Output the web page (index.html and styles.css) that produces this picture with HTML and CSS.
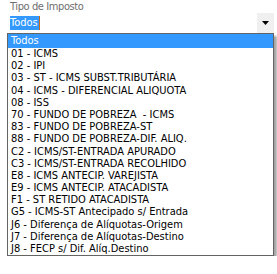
FILE: index.html
```html
<!DOCTYPE html>
<html>
<head>
  <meta charset="utf-8">
  <title>Tipo de Imposto</title>
  <link rel="stylesheet" href="styles.css">
</head>
<body>
  <div class="field">
    <label class="field-label">Tipo de Imposto</label>
    <div class="select">
      <span class="select-value">Todos</span><span class="caret"></span>
      <span class="select-btn">
        <svg width="7" height="4" viewBox="0 0 7 4"><path d="M0 0H7L3.5 4Z" fill="#000"/></svg>
      </span>
    </div>
    <ul class="dropdown">
      <li class="selected">Todos</li>
      <li>01 - ICMS</li>
      <li>02 - IPI</li>
      <li>03 - ST - ICMS SUBST.TRIBUTÁRIA</li>
      <li>04 - ICMS - DIFERENCIAL ALIQUOTA</li>
      <li>08 - ISS</li>
      <li>70 - FUNDO DE POBREZA&nbsp; - ICMS</li>
      <li>83 - FUNDO DE POBREZA-ST</li>
      <li>88 - FUNDO DE POBREZA-DIF. ALIQ.</li>
      <li>C2 - ICMS/ST-ENTRADA APURADO</li>
      <li>C3 - ICMS/ST-ENTRADA RECOLHIDO</li>
      <li>E8 - ICMS ANTECIP. VAREJISTA</li>
      <li>E9 - ICMS ANTECIP. ATACADISTA</li>
      <li>F1 - ST RETIDO ATACADISTA</li>
      <li>G5 - ICMS-ST Antecipado s/ Entrada</li>
      <li>J6 - Diferença de Alíquotas-Origem</li>
      <li>J7 - Diferença de Alíquotas-Destino</li>
      <li>J8 - FECP s/ Dif. Alíq.Destino</li>
    </ul>
  </div>
</body>
</html>
```

FILE: styles.css
```css
*{
  margin: 0;
  padding: 0;
  box-sizing: border-box;
}
body
{
  background: #fff;
  font-family: "DejaVu Sans Condensed", "DejaVu Sans", sans-serif;
  font-size: 11px;
  color: #000;
}
.field
{
  width: 277px;
  padding-top: 1px;
}
.field-label
{
  display: block;
  height: 12px;
  line-height: 12px;
  padding-left: 10px;
  color: #6e6e6e;
  letter-spacing: -0.4px;
}
.select
{
  display: flex;
  align-items: center;
  height: 20px;
  padding-left: 10px;
  padding-right: 3px;
}
.select-value
{
  background: #3399ff;
  color: #fff;
  height: 14px;
  line-height: 14px;
  padding: 0 1px 0 0;
}
.caret
{
  width: 1px;
  height: 14px;
  background: #c86a1a;
}
.select-btn
{
  margin-left: auto;
  width: 17px;
  height: 20px;
  background: #f0f0f0;
  display: flex;
  align-items: center;
  justify-content: center;
}
.dropdown
{
  list-style: none;
  margin-left: 7px;
  width: 267px;
  border: 1px solid #646464;
  background: #fff;
  box-shadow: 3px 3px 2px rgba(0,0,0,0.35);
}
.dropdown li
{
  height: 12.2px;
  line-height: 12.2px;
  padding-left: 3px;
  white-space: nowrap;
}
.dropdown li.selected
{
  height: 14px;
  line-height: 14px;
  background: #3399ff;
  color: #fff;
}
```
